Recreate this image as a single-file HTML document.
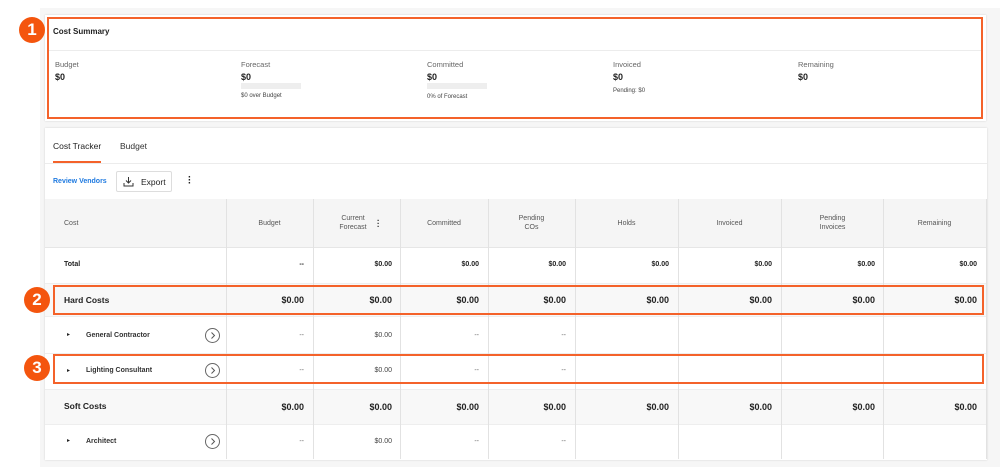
<!DOCTYPE html>
<html><head><style>
*{margin:0;padding:0;box-sizing:border-box}
body{width:1000px;height:467px;background:#fff;font-family:"Liberation Sans",sans-serif;color:#222;position:relative;overflow:hidden}
.a{position:absolute}
.bg{left:40px;top:8px;width:960px;height:459px;background:#f6f6f6}
.card{background:#fff;box-shadow:0 0 2px rgba(0,0,0,.15)}
.ob{border:2px solid #f4622a}
.badge{width:26px;height:26px;border-radius:50%;background:#f4550e;color:#fff;font-weight:bold;font-size:17px;text-align:center;line-height:26px}
.lbl{font-size:7.5px;color:#666}
.val{font-size:9px;font-weight:bold}
.sm{font-size:6px;color:#444}
.bar{width:60px;height:6px;background:#eee}
.vl{width:1px;background:#e2e2e2}
.t{font-size:7px;text-align:right}
.hd{font-size:7px;color:#555;text-align:center;line-height:9px}
.b9{font-size:9px;font-weight:bold;text-align:right}
.circ{width:15px;height:15px;border:1px solid #666;border-radius:50%}
</style></head><body>
<div class="a bg"></div>
<div class="a card" style="left:45px;top:15px;width:941px;height:106px"></div>
<div class="a" style="left:48px;top:50px;width:933px;height:1px;background:#ececec"></div>
<div class="a" style="left:53px;top:27px;font-size:8px;font-weight:bold">Cost Summary</div>
<div class="a lbl" style="left:55px;top:60px">Budget</div><div class="a val" style="left:55px;top:72px">$0</div>
<div class="a lbl" style="left:241px;top:60px">Forecast</div><div class="a val" style="left:241px;top:72px">$0</div>
<div class="a bar" style="left:241px;top:83px"></div><div class="a sm" style="left:241px;top:93px">$0 over Budget</div>
<div class="a lbl" style="left:427px;top:60px">Committed</div><div class="a val" style="left:427px;top:72px">$0</div>
<div class="a bar" style="left:427px;top:83px"></div><div class="a sm" style="left:427px;top:94px">0% of Forecast</div>
<div class="a lbl" style="left:613px;top:60px">Invoiced</div><div class="a val" style="left:613px;top:72px">$0</div>
<div class="a sm" style="left:613px;top:88px">Pending: $0</div>
<div class="a lbl" style="left:798px;top:60px">Remaining</div><div class="a val" style="left:798px;top:72px">$0</div>
<div class="a ob" style="left:47px;top:17px;width:936px;height:102px"></div>
<div class="a card" style="left:45px;top:128px;width:942px;height:332px"></div>
<div class="a" style="left:53px;top:141px;font-size:8.5px">Cost Tracker</div>
<div class="a" style="left:120px;top:141px;font-size:8.5px;color:#333">Budget</div>
<div class="a" style="left:53px;top:161px;width:48px;height:2px;background:#f4622a"></div>
<div class="a" style="left:45px;top:163px;width:942px;height:1px;background:#ececec"></div>
<div class="a" style="left:53px;top:178px;font-size:7px;color:#1f7ae0;font-weight:bold">Review Vendors</div>
<div class="a" style="left:116px;top:171px;width:56px;height:21px;border:1px solid #ddd;border-radius:2px;font-size:8.5px;padding:5px 0 0 24px">Export</div>
<svg class="a" style="left:123px;top:176px" width="11" height="11" viewBox="0 0 11 11" fill="none" stroke="#333" stroke-width="1"><path d="M5.5 1v6M3 4.5l2.5 2.5 2.5-2.5M1 7v3h9V7"/></svg>
<div class="a" style="left:188px;top:176px;font-size:10px;line-height:3px;font-weight:bold">·<br>·<br>·</div>
<div class="a" style="left:45px;top:199px;width:941px;height:48px;background:#f5f5f5"></div>
<div class="a" style="left:45px;top:283px;width:941px;height:33px;background:#f8f8f8"></div>
<div class="a" style="left:45px;top:389px;width:941px;height:35px;background:#f8f8f8"></div>
<div class="a" style="left:45px;top:247px;width:941px;height:1px;background:#e6e6e6"></div>
<div class="a" style="left:45px;top:283px;width:941px;height:1px;background:#eee"></div>
<div class="a" style="left:45px;top:316px;width:941px;height:1px;background:#eee"></div>
<div class="a" style="left:45px;top:353px;width:941px;height:1px;background:#eee"></div>
<div class="a" style="left:45px;top:389px;width:941px;height:1px;background:#eee"></div>
<div class="a" style="left:45px;top:424px;width:941px;height:1px;background:#eee"></div>
<div class="a vl" style="left:226px;top:199px;height:260px"></div>
<div class="a vl" style="left:313px;top:199px;height:260px"></div>
<div class="a vl" style="left:400px;top:199px;height:260px"></div>
<div class="a vl" style="left:488px;top:199px;height:260px"></div>
<div class="a vl" style="left:575px;top:199px;height:260px"></div>
<div class="a vl" style="left:678px;top:199px;height:260px"></div>
<div class="a vl" style="left:781px;top:199px;height:260px"></div>
<div class="a vl" style="left:883px;top:199px;height:260px"></div>
<div class="a vl" style="left:986px;top:199px;height:260px"></div>
<div class="a hd" style="left:64px;top:219px">Cost</div>
<div class="a hd" style="left:226px;top:219px;width:87px">Budget</div>
<div class="a hd" style="left:313px;top:214px;width:80px">Current<br>Forecast</div>
<div class="a" style="left:377px;top:219px;font-size:8px;line-height:3px;font-weight:bold">·<br>·<br>·</div>
<div class="a hd" style="left:400px;top:219px;width:88px">Committed</div>
<div class="a hd" style="left:488px;top:214px;width:87px">Pending<br>COs</div>
<div class="a hd" style="left:575px;top:219px;width:103px">Holds</div>
<div class="a hd" style="left:678px;top:219px;width:103px">Invoiced</div>
<div class="a hd" style="left:781px;top:214px;width:103px">Pending<br>Invoices</div>
<div class="a hd" style="left:883px;top:219px;width:103px">Remaining</div>
<div class="a t" style="left:64px;top:261px;font-weight:bold;text-align:left">Total</div>
<div class="a t" style="left:226px;top:261px;width:78px;font-weight:bold">--</div>
<div class="a t" style="left:313px;top:261px;width:79px;font-weight:bold">$0.00</div>
<div class="a t" style="left:400px;top:261px;width:79px;font-weight:bold">$0.00</div>
<div class="a t" style="left:488px;top:261px;width:78px;font-weight:bold">$0.00</div>
<div class="a t" style="left:575px;top:261px;width:94px;font-weight:bold">$0.00</div>
<div class="a t" style="left:678px;top:261px;width:94px;font-weight:bold">$0.00</div>
<div class="a t" style="left:781px;top:261px;width:94px;font-weight:bold">$0.00</div>
<div class="a t" style="left:883px;top:261px;width:94px;font-weight:bold">$0.00</div>
<div class="a" style="left:64px;top:295px;font-size:8.5px;font-weight:bold">Hard Costs</div>
<div class="a b9" style="left:226px;top:295px;width:78px">$0.00</div>
<div class="a b9" style="left:313px;top:295px;width:79px">$0.00</div>
<div class="a b9" style="left:400px;top:295px;width:79px">$0.00</div>
<div class="a b9" style="left:488px;top:295px;width:78px">$0.00</div>
<div class="a b9" style="left:575px;top:295px;width:94px">$0.00</div>
<div class="a b9" style="left:678px;top:295px;width:94px">$0.00</div>
<div class="a b9" style="left:781px;top:295px;width:94px">$0.00</div>
<div class="a b9" style="left:883px;top:295px;width:94px">$0.00</div>
<div class="a" style="left:64px;top:401px;font-size:8.5px;font-weight:bold">Soft Costs</div>
<div class="a b9" style="left:226px;top:402px;width:78px">$0.00</div>
<div class="a b9" style="left:313px;top:402px;width:79px">$0.00</div>
<div class="a b9" style="left:400px;top:402px;width:79px">$0.00</div>
<div class="a b9" style="left:488px;top:402px;width:78px">$0.00</div>
<div class="a b9" style="left:575px;top:402px;width:94px">$0.00</div>
<div class="a b9" style="left:678px;top:402px;width:94px">$0.00</div>
<div class="a b9" style="left:781px;top:402px;width:94px">$0.00</div>
<div class="a b9" style="left:883px;top:402px;width:94px">$0.00</div>
<div class="a" style="left:67px;top:331px;font-size:6px">▸</div>
<div class="a" style="left:86px;top:332px;font-size:7px;font-weight:bold;color:#333">General Contractor</div>
<div class="a circ" style="left:205px;top:328px"></div>
<div class="a t" style="left:226px;top:332px;width:78px;color:#666">--</div>
<div class="a t" style="left:313px;top:332px;width:79px;color:#444">$0.00</div>
<div class="a t" style="left:400px;top:332px;width:79px;color:#666">--</div>
<div class="a t" style="left:488px;top:332px;width:78px;color:#666">--</div>
<div class="a" style="left:67px;top:367px;font-size:6px">▸</div>
<div class="a" style="left:86px;top:367px;font-size:7px;font-weight:bold;color:#333">Lighting Consultant</div>
<div class="a circ" style="left:205px;top:363px"></div>
<div class="a t" style="left:226px;top:367px;width:78px;color:#666">--</div>
<div class="a t" style="left:313px;top:367px;width:79px;color:#444">$0.00</div>
<div class="a t" style="left:400px;top:367px;width:79px;color:#666">--</div>
<div class="a t" style="left:488px;top:367px;width:78px;color:#666">--</div>
<div class="a" style="left:67px;top:437px;font-size:6px">▸</div>
<div class="a" style="left:86px;top:438px;font-size:7px;font-weight:bold;color:#333">Architect</div>
<div class="a circ" style="left:205px;top:434px"></div>
<div class="a t" style="left:226px;top:438px;width:78px;color:#666">--</div>
<div class="a t" style="left:313px;top:438px;width:79px;color:#444">$0.00</div>
<div class="a t" style="left:400px;top:438px;width:79px;color:#666">--</div>
<div class="a t" style="left:488px;top:438px;width:78px;color:#666">--</div>
<svg class="a" style="left:205px;top:328px" width="15" height="15"><path d="M6.5 4.5l3 3-3 3" fill="none" stroke="#555"/></svg>
<svg class="a" style="left:205px;top:363px" width="15" height="15"><path d="M6.5 4.5l3 3-3 3" fill="none" stroke="#555"/></svg>
<svg class="a" style="left:205px;top:434px" width="15" height="15"><path d="M6.5 4.5l3 3-3 3" fill="none" stroke="#555"/></svg>
<div class="a ob" style="left:53px;top:285px;width:931px;height:30px"></div>
<div class="a ob" style="left:53px;top:354px;width:931px;height:30px"></div>
<div class="a badge" style="left:19px;top:17px">1</div>
<div class="a badge" style="left:24px;top:287px">2</div>
<div class="a badge" style="left:24px;top:355px">3</div>
</body></html>
